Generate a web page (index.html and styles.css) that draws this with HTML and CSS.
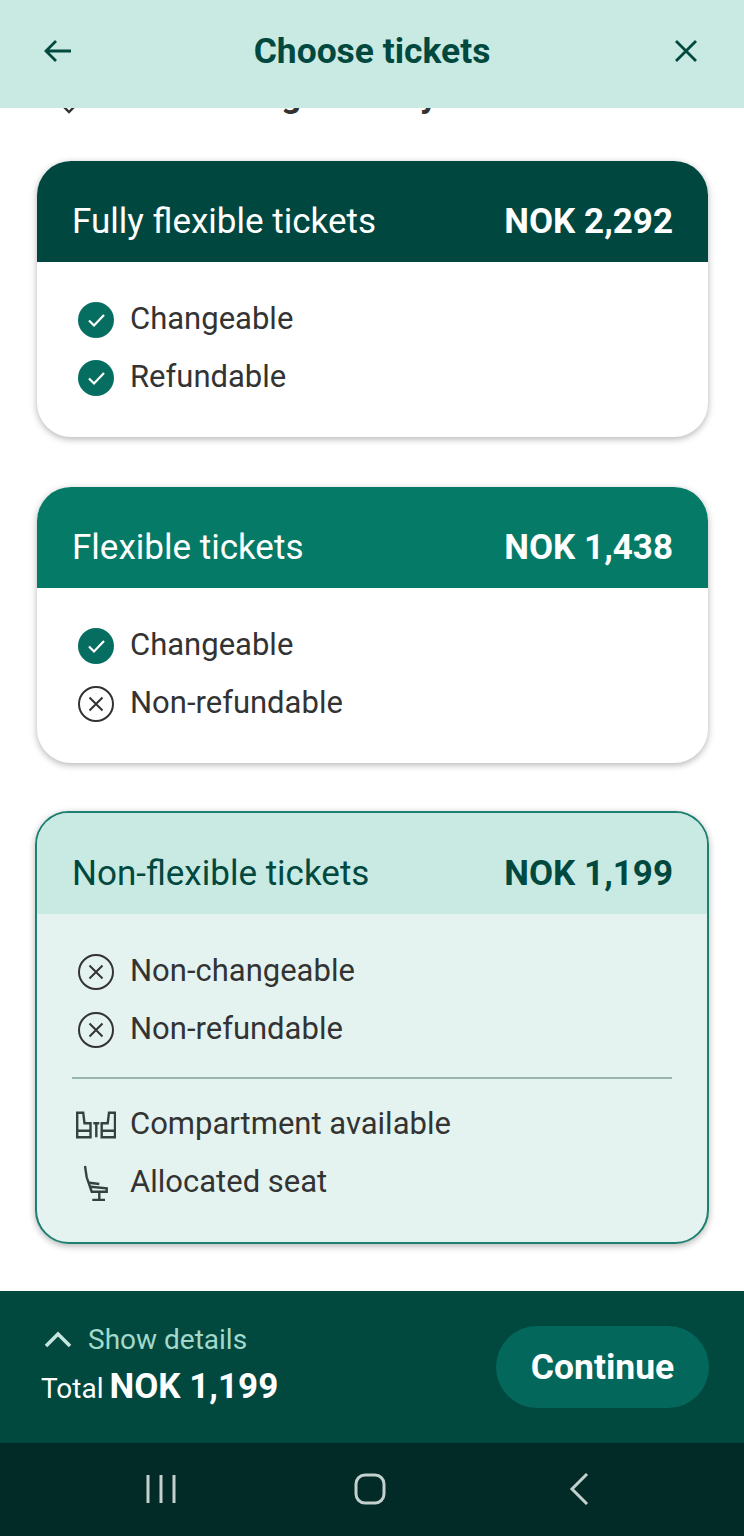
FILE: index.html
```html
<!DOCTYPE html>
<html lang="en">
<head>
<meta charset="utf-8">
<title>Choose tickets</title>
<link rel="stylesheet" href="styles.css">
</head>
<body>
<div class="screen">
  <header class="topbar">
    <svg class="top-icon" width="32" height="32" viewBox="0 0 32 32"><path d="M29 16H4M14 6L4 16l10 10"/></svg>
    <h1 class="title">Choose tickets</h1>
    <svg class="top-icon" width="24" height="24" viewBox="0 0 24 24"><path d="M2 2l20 20M22 2L2 22"/></svg>
  </header>
  <main class="content">
    <div class="peek">
      <svg class="peek-chev" width="16" height="16" viewBox="0 0 16 16"><path d="M2 4l6 6 6-6"/></svg>
      <span class="peek-text">Oslo S - Bergen - May.</span>
    </div>

    <section class="card">
      <div class="card-head head-dark"><span class="name">Fully flexible tickets</span><span class="price">NOK 2,292</span></div>
      <ul class="card-body">
        <li class="row"><svg class="ic" width="36" height="36" viewBox="0 0 36 36"><circle class="fill" cx="18" cy="18" r="18"/><path class="tick" d="M11 18.5l5 5 10-10.5"/></svg><span>Changeable</span></li>
        <li class="row"><svg class="ic" width="36" height="36" viewBox="0 0 36 36"><circle class="fill" cx="18" cy="18" r="18"/><path class="tick" d="M11 18.5l5 5 10-10.5"/></svg><span>Refundable</span></li>
      </ul>
    </section>

    <section class="card">
      <div class="card-head head-mid"><span class="name">Flexible tickets</span><span class="price">NOK 1,438</span></div>
      <ul class="card-body">
        <li class="row"><svg class="ic" width="36" height="36" viewBox="0 0 36 36"><circle class="fill" cx="18" cy="18" r="18"/><path class="tick" d="M11 18.5l5 5 10-10.5"/></svg><span>Changeable</span></li>
        <li class="row"><svg class="ic" width="36" height="36" viewBox="0 0 36 36"><circle class="ring" cx="18" cy="18" r="17"/><path class="cross" d="M11.5 11.5l13 13M24.5 11.5l-13 13"/></svg><span>Non-refundable</span></li>
      </ul>
    </section>

    <section class="card card-selected">
      <div class="card-head head-light"><span class="name">Non-flexible tickets</span><span class="price">NOK 1,199</span></div>
      <div class="card-body">
        <div class="row"><svg class="ic" width="36" height="36" viewBox="0 0 36 36"><circle class="ring" cx="18" cy="18" r="17"/><path class="cross" d="M11.5 11.5l13 13M24.5 11.5l-13 13"/></svg><span>Non-changeable</span></div>
        <div class="row"><svg class="ic" width="36" height="36" viewBox="0 0 36 36"><circle class="ring" cx="18" cy="18" r="17"/><path class="cross" d="M11.5 11.5l13 13M24.5 11.5l-13 13"/></svg><span>Non-refundable</span></div>
        <hr class="rule">
        <div class="row"><svg class="ic ic-line" width="40" height="36" viewBox="0 0 40 36"><path d="M1.2 5.700h6L8.500 16.300h6v14H1.200zM1.200 23.700H14.500M17.300 16.300h6M20.300 16.300v14M39 5.700h-6l-1.300 10.600h-6v14H39zM39 23.700H25.700"/></svg><span>Compartment available</span></div>
        <div class="row"><svg class="ic ic-line" width="40" height="36" viewBox="0 0 40 36"><path d="M9 1l1.700 11.300 5 14.400h15v-3.400l-16-1.600M13.300 17.700l10 1.300M23.300 26.700V35M16.300 35H29"/></svg><span>Allocated seat</span></div>
      </div>
    </section>
  </main>
  <footer class="paybar">
    <div class="sum">
      <div class="details"><svg class="chev-up" width="30" height="20" viewBox="0 0 30 20"><path d="M3 17L15 5l12 12"/></svg><span>Show details</span></div>
      <div class="total"><span class="total-label">Total</span> <strong class="total-val">NOK 1,199</strong></div>
    </div>
    <button class="continue">Continue</button>
  </footer>
  <nav class="sysnav">
    <svg width="32" height="32" viewBox="0 0 32 32"><path d="M3 2v28M16 2v28M29 2v28"/></svg>
    <svg width="32" height="32" viewBox="0 0 32 32"><rect x="2" y="2" width="28" height="28" rx="9"/></svg>
    <svg width="32" height="32" viewBox="0 0 32 32"><path d="M24 1L9 16l15 15"/></svg>
  </nav>
</div>
</body>
</html>
```

FILE: styles.css
```css
* { box-sizing: border-box; }
html, body { margin: 0; padding: 0; }
body { background: #fff; font-family: Roboto, "Liberation Sans", sans-serif; }
.screen { width: 744px; height: 1536px; display: flex; flex-direction: column; overflow: hidden; }

.topbar { height: 108px; flex: none; background: #c9eae3; display: flex; align-items: center; justify-content: space-between; padding: 0 46px 6px 42px; position: relative; z-index: 1; }
.title { margin: 0 4px 0 0; font-size: 35.4px; font-weight: 700; color: #01483f; }
.top-icon { fill: none; stroke: #01483f; stroke-width: 2.8; }

.content { flex: 1; display: flex; flex-direction: column; gap: 50px; padding: 0 36px 0 37px; background: #fff; }
.peek { height: 8px; margin-bottom: -5px; overflow: hidden; display: flex; gap: 18px; padding-left: 24px; color: #333; align-items: flex-start; }
.peek-chev { fill: none; stroke: #333; stroke-width: 2.4; flex: none; margin-top: -6px; }
.peek-text { font-size: 35px; font-weight: 700; line-height: 40px; margin-top: -32px; white-space: nowrap; }

.card { border-radius: 34px; background: #fff; box-shadow: 0 2px 7px rgba(0,0,0,.3); overflow: hidden; }
.card-head { height: 101px; display: flex; align-items: center; justify-content: space-between; padding: 19px 35px 0 35px; font-size: 35px; }
.head-dark { background: #00473f; color: #fff; }
.head-mid { background: #057a67; color: #fff; }
.head-light { background: #c9eae3; color: #01483f; padding-right: 34px; }
.price { font-weight: 700; }
.card-body { list-style: none; margin: 0; padding: 27px 35px 32px 35px; display: flex; flex-direction: column; color: #333; font-size: 31px; }
.row { height: 58px; display: flex; align-items: center; gap: 16px; padding-left: 6px; }
.ic { flex: none; margin-top: 3px; }
.fill { fill: #066e60; }
.tick { fill: none; stroke: #fff; stroke-width: 2.2; }
.ring { fill: none; stroke: #333; stroke-width: 2; }
.cross { fill: none; stroke: #333; stroke-width: 2; }
.ic-line { fill: none; stroke: #33413f; stroke-width: 2.4; margin-left: -2px; margin-right: -2px; }
.card-selected { background: #e4f3f0; border: 2px solid #1d8070; margin: -2px -1px 0 -2px; }
.rule { border: 0; height: 2px; background: #99b5ae; margin: 20px 0 15px; }

.paybar { height: 152px; flex: none; background: #01483f; display: flex; align-items: center; justify-content: space-between; padding: 0 35px 0 41px; }
.sum { margin-top: -4px; }
.details { display: flex; align-items: center; gap: 15px; color: #a3d9cb; font-size: 28px; padding-left: 2px; }
.chev-up { fill: none; stroke: #c4e6dd; stroke-width: 3.6; margin-top: -2px; }
.total { color: #fff; margin-top: 10px; }
.total-label { font-size: 28px; }
.total-val { font-size: 35px; margin-left: 2px; }
.continue { width: 213px; height: 82px; border: 0; border-radius: 41px; background: #03685b; color: #fff; font: 700 35.5px Roboto, sans-serif; padding-bottom: 2px; }
.sysnav { height: 93px; flex: none; background: #022b27; display: flex; align-items: center; justify-content: space-between; padding: 0 149px 2px 145px; }
.sysnav svg { fill: none; stroke: #c3d0cd; stroke-width: 3; }
```
